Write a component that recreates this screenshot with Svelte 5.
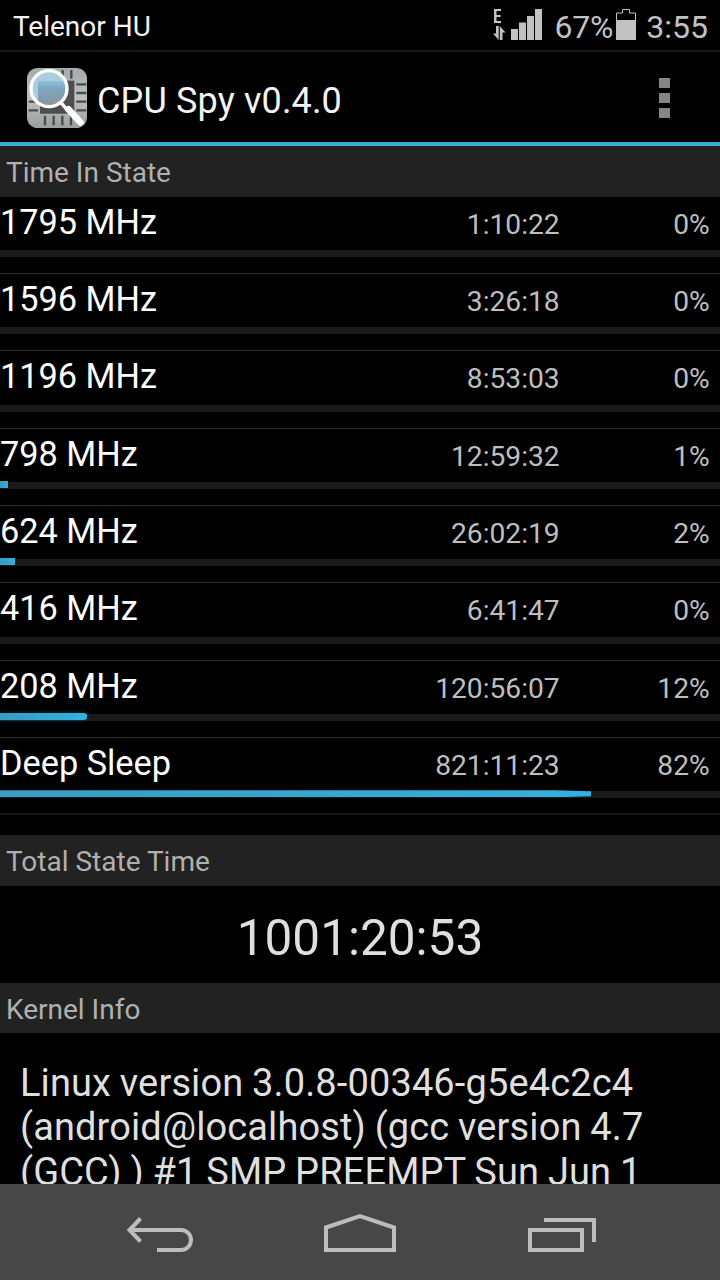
<script>
  const states = [
    { name: '1795 MHz', time: '1:10:22', pct: 0 },
    { name: '1596 MHz', time: '3:26:18', pct: 0 },
    { name: '1196 MHz', time: '8:53:03', pct: 0 },
    { name: '798 MHz', time: '12:59:32', pct: 1 },
    { name: '624 MHz', time: '26:02:19', pct: 2 },
    { name: '416 MHz', time: '6:41:47', pct: 0 },
    { name: '208 MHz', time: '120:56:07', pct: 12 },
    { name: 'Deep Sleep', time: '821:11:23', pct: 82 }
  ]

  const kernelLines = [
    'Linux version 3.0.8-00346-g5e4c2c4',
    '(android@localhost) (gcc version 4.7',
    '(GCC) ) #1 SMP PREEMPT Sun Jun 1'
  ]
</script>

<div class="screen">
  <div class="status-bar">
    <span class="carrier">Telenor HU</span>
    <div class="status-right">
      <svg class="signal" viewBox="0 0 50 32" width="50" height="32">
        <g fill="#c2c2c2">
          <path d="M1 1H8V3H3.5V7H7.5V9H3.5V13H8V15H1Z" />
          <path d="M3 18H5.7V32L0 25.5H3Z" />
          <path d="M6.8 32H9.5V24.5H12.5L6.8 18Z" />
          <rect x="18" y="21" width="7" height="11" />
          <rect x="26" y="14.5" width="7" height="17.5" />
          <rect x="34" y="8" width="7" height="24" />
          <rect x="42" y="1" width="7" height="31" />
        </g>
      </svg>
      <span class="battery-pct">67%</span>
      <svg class="battery" viewBox="0 0 20 31" width="20" height="31">
        <path d="M0.5 12V4H6.5V0.5H13.5V4H19.5V12" fill="none" stroke="#c2c2c2" />
        <rect y="11" width="20" height="20" fill="#c2c2c2" />
      </svg>
      <span class="clock">3:55</span>
    </div>
  </div>

  <header class="action-bar">
    <svg class="app-icon" viewBox="21 24 180 180" width="60" height="60">
      <defs>
        <linearGradient id="plate" x1="0" y1="0" x2="0" y2="1">
          <stop offset="0" stop-color="#a3abab" />
          <stop offset="0.5" stop-color="#bcc1c0" />
          <stop offset="1" stop-color="#99a09e" />
        </linearGradient>
        <linearGradient id="lens" x1="0" y1="0" x2="0" y2="1">
          <stop offset="0" stop-color="#8fc0dc" />
          <stop offset="0.35" stop-color="#7ba6bf" />
          <stop offset="1" stop-color="#8b959b" />
        </linearGradient>
      </defs>
      <rect x="21" y="24" width="180" height="180" rx="32" fill="url(#plate)" />
      <rect x="60" y="62" width="103" height="99" fill="#4e4e4e" />
      <g stroke="#484d4c" stroke-width="7">
        <path d="M128 30V56M154 30V56M75 167V196M101 167V196M127 167V196M153 167V196" />
        <path d="M169 73H199M169 99H199M169 125H199M169 151H199M26 125H54M26 151H54" />
      </g>
      <circle cx="87" cy="86" r="53" fill="#a9cfdf" />
      <path d="M54 63H137V86A50 50 0 0 1 54 123Z" fill="url(#lens)" />
      <circle cx="87" cy="86" r="54" fill="none" stroke="#fff" stroke-width="10" />
      <path d="M122 127L143 151" stroke="#fff" stroke-width="10" />
      <path d="M145 148L181 187" stroke="#fff" stroke-width="20" stroke-linecap="round" />
    </svg>
    <h1>CPU Spy v0.4.0</h1>
    <div class="overflow">
      <i></i>
      <i></i>
      <i></i>
    </div>
  </header>

  <main>
    <h2>Time In State</h2>
    <div class="states">
      {#each states as state}
        <div class="state">
          <div class="labels">
            <span class="name">{state.name}</span>
            <span class="time">{state.time}</span>
            <span class="pct">{state.pct}%</span>
          </div>
          <div class="track">
            {#if state.pct > 0}
              <div
                class="fill"
                class:round={state.pct > 2 && state.pct <= 50}
                class:long={state.pct > 50}
                style="width: {state.pct}%"
              ></div>
            {/if}
          </div>
        </div>
      {/each}
    </div>

    <h2>Total State Time</h2>
    <div class="total">1001:20:53</div>

    <h2>Kernel Info</h2>
    <div class="kernel">
      {#each kernelLines as line}
        <div>{line}</div>
      {/each}
    </div>
  </main>

  <nav>
    <svg viewBox="0 0 70 40" width="70" height="40">
      <g fill="none" stroke="#bdbdbd" stroke-width="4">
        <path d="M16.5 6.5L5.5 18L16.5 29.5" />
        <path d="M5.5 18H57A10 10 0 0 1 57 38H33" />
      </g>
    </svg>
    <svg viewBox="0 0 72 40" width="72" height="40">
      <path d="M2 15.5L36 4L70 15.5V38H2Z" fill="none" stroke="#bdbdbd" stroke-width="4" />
    </svg>
    <svg viewBox="0 0 70 40" width="70" height="40">
      <g fill="none" stroke="#bdbdbd" stroke-width="4">
        <path d="M18 8H68V30" />
        <rect x="4" y="18" width="52" height="20" />
      </g>
    </svg>
  </nav>
</div>

<style>
  :global(body) {
    background: #000;
  }

  .screen {
    display: flex;
    flex-direction: column;
    width: 720px;
    height: 1280px;
    overflow: hidden;
    background: #000;
    color: #fff;
    font-family: Roboto, 'Liberation Sans', sans-serif;
    white-space: nowrap;
  }

  h1,
  h2 {
    margin: 0;
    font-weight: 400;
  }

  svg {
    overflow: visible;
  }

  .status-bar {
    display: flex;
    flex: none;
    justify-content: space-between;
    height: 50px;
    padding: 0 12px 0 13px;
    border-bottom: 2px solid #181818;
  }

  .carrier {
    font-size: 28px;
    line-height: 54px;
    color: #f2f2f2;
  }

  .status-right {
    display: flex;
    font-size: 32px;
    line-height: 54px;
    color: #c2c2c2;
  }

  .signal {
    margin: 8px 11px 0 0;
  }

  .battery {
    margin: 9px 10px 0 3px;
  }

  .battery-pct {
    letter-spacing: -0.2px;
  }

  .action-bar {
    display: flex;
    flex: none;
    align-items: center;
    box-sizing: border-box;
    height: 94px;
    padding: 2px 50px 0 27px;
    border-bottom: 4px solid #3cacd4;
  }

  .app-icon {
    margin-right: 10px;
  }

  h1 {
    padding-top: 5px;
    font-size: 36px;
    letter-spacing: 0.15px;
    color: #f3f3f3;
  }

  .overflow {
    display: flex;
    flex-direction: column;
    gap: 5px;
    margin-left: auto;
  }

  .overflow i {
    width: 11px;
    height: 10px;
    background: #858585;
  }

  main {
    flex: 1;
    min-height: 0;
    overflow: hidden;
  }

  h2 {
    height: 50.67px;
    padding-left: 6px;
    background: #222;
    font-size: 28px;
    line-height: 54.5px;
    color: #b0b0b0;
  }

  .states {
    margin-bottom: 20px;
  }

  .state {
    box-sizing: border-box;
    height: 77.33px;
    border-bottom: 1px solid #2b2b2b;
  }

  .state:last-child {
    border-bottom: 2px solid #191919;
  }

  .labels {
    display: grid;
    grid-template-columns: 1fr 240px 150px;
    align-items: baseline;
    height: 53.33px;
    padding-right: 10.3px;
    line-height: 51.5px;
  }

  .name {
    font-size: 34.3px;
  }

  .time,
  .pct {
    font-size: 28.2px;
    text-align: right;
    color: #bebebe;
  }

  .track {
    height: 7px;
    background: #1a1a1a;
  }

  .fill {
    position: relative;
    top: -1px;
    height: 7px;
    padding-right: 0.6px;
    background: linear-gradient(90deg, #3a9cc2, #33b0e0);
  }

  .fill.round {
    border-radius: 0 3px 3px 0;
    box-shadow: 0 0 4px rgba(40, 160, 200, 0.35);
  }

  .fill.long {
    clip-path: polygon(0 0, 94% 0, 100% 1px, 100% 6px, 94% 100%, 0 100%);
  }

  .total {
    height: 96.67px;
    font-size: 49.5px;
    line-height: 104px;
    text-align: center;
    color: #dfdfdf;
  }

  .kernel {
    padding: 27.5px 20px 0;
    font-size: 38px;
    line-height: 44.5px;
    letter-spacing: 0.12px;
    word-spacing: -0.8px;
    color: #dfdfdf;
  }

  nav {
    display: flex;
    flex: none;
    justify-content: center;
    align-items: center;
    gap: 130px;
    height: 96px;
    background: #474747;
  }
</style>
